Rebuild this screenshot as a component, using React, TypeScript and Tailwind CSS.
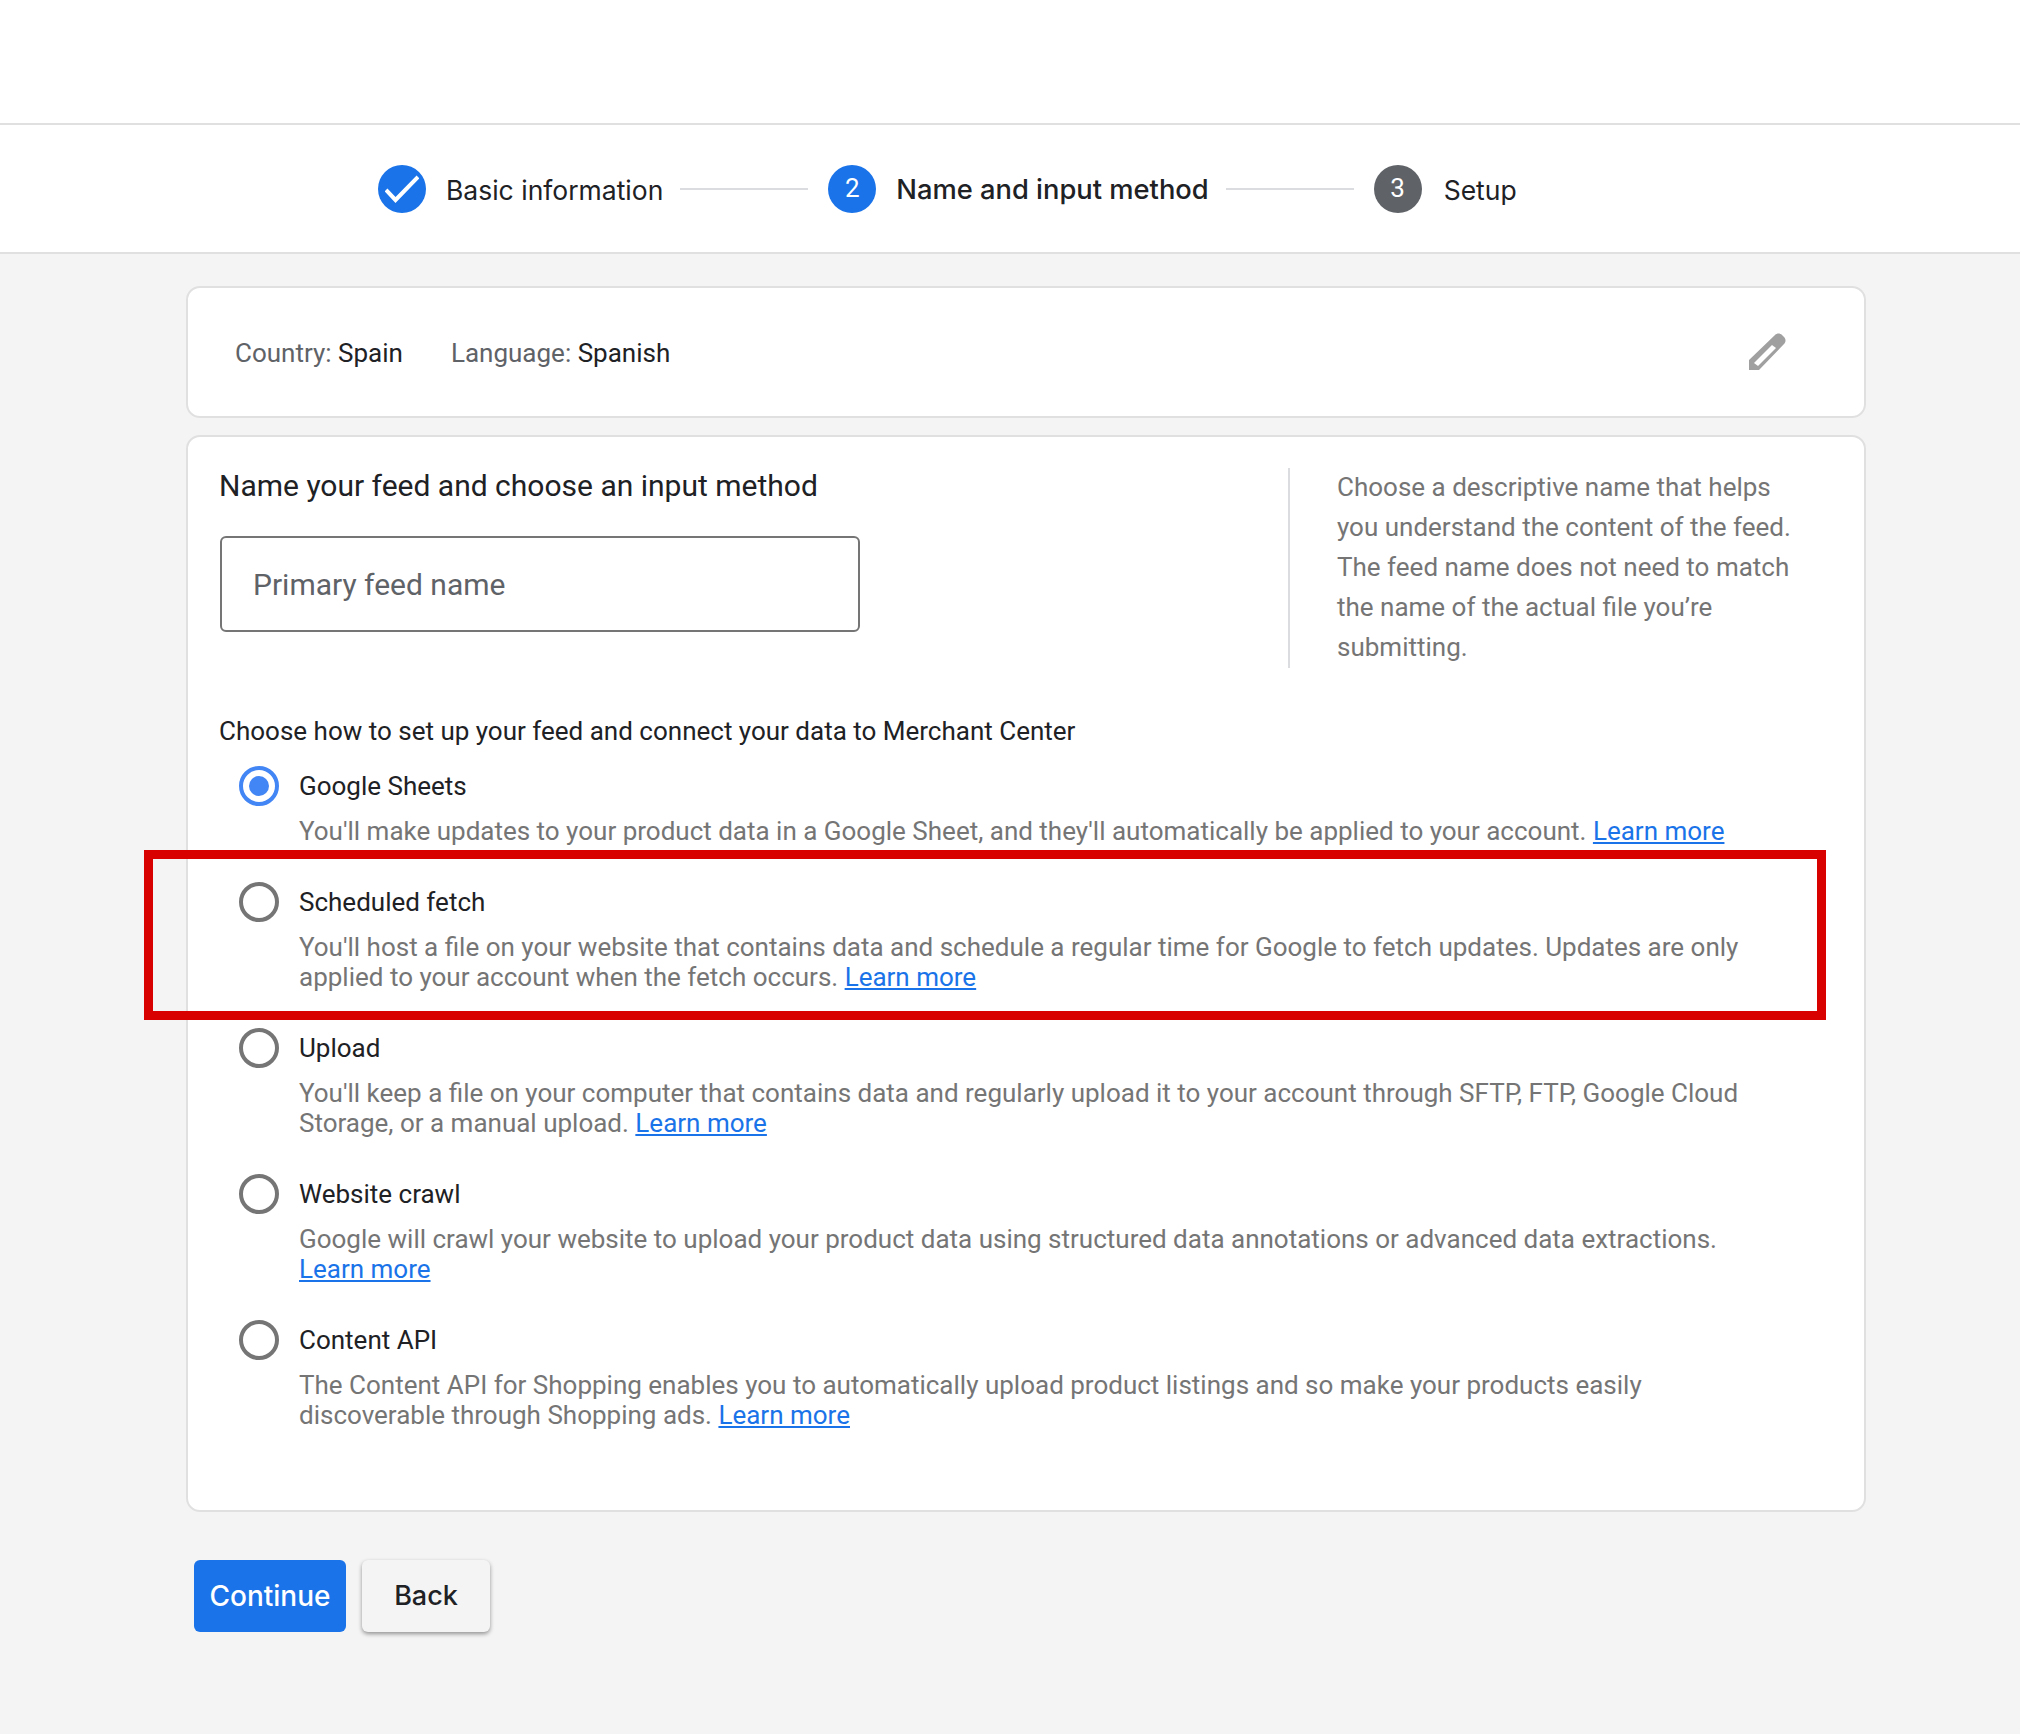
const roboto = "font-['Roboto',sans-serif]";
const sans = "font-['Inter',sans-serif]";

const options = [
  {
    title: "Google Sheets",
    desc: "You'll make updates to your product data in a Google Sheet, and they'll automatically be applied to your account. ",
    selected: true,
  },
  {
    title: "Scheduled fetch",
    desc: "You'll host a file on your website that contains data and schedule a regular time for Google to fetch updates. Updates are only applied to your account when the fetch occurs. ",
  },
  {
    title: "Upload",
    desc: "You'll keep a file on your computer that contains data and regularly upload it to your account through SFTP, FTP, Google Cloud Storage, or a manual upload. ",
  },
  {
    title: "Website crawl",
    desc: "Google will crawl your website to upload your product data using structured data annotations or advanced data extractions. ",
  },
  {
    title: "Content API",
    desc: "The Content API for Shopping enables you to automatically upload product listings and so make your products easily discoverable through Shopping ads. ",
  },
];

function Step({
  badge,
  label,
  dark,
  bold,
}: {
  badge: React.ReactNode;
  label: string;
  dark?: boolean;
  bold?: boolean;
}) {
  return (
    <div className="flex items-center">
      <div
        className={`flex h-[48px] w-[48px] items-center justify-center rounded-full text-[26px] text-white ${
          dark ? "bg-[#5f6368]" : "bg-[#1a73e8]"
        }`}
      >
        {badge}
      </div>
      <span
        className={`pt-[4px] text-[#202124] ${sans} ${dark ? "ml-[22px]" : "ml-[20px]"} ${bold ? "text-[27.3px] font-medium" : "text-[26.5px]"}`}
      >
        {label}
      </span>
    </div>
  );
}

function StepLine() {
  return <div className="ml-[17px] mr-[20px] h-[2px] w-[128px] bg-[#dadce0]" />;
}

function Radio({ selected }: { selected?: boolean }) {
  if (selected) {
    return (
      <div className="flex h-[40px] w-[40px] items-center justify-center rounded-full border-[4px] border-[#4285f4]">
        <div className="h-[20px] w-[20px] rounded-full bg-[#4285f4]" />
      </div>
    );
  }
  return <div className="h-[40px] w-[40px] rounded-full border-[4px] border-[#757575]" />;
}

export default function App() {
  return (
    <div className={`relative min-h-[1734px] bg-[#f4f4f4] ${roboto}`}>
      <div className="h-[125px] border-b-2 border-[#e0e0e0] bg-white" />
      <div className="flex h-[129px] items-center border-b-2 border-[#e0e0e0] bg-white pl-[378px]">
        <Step
          label="Basic information"
          badge={
            <svg width="34" height="30" viewBox="0 0 34 30" fill="none">
              <path d="M1 16L10.5 26L33 3" stroke="white" strokeWidth="4" />
            </svg>
          }
        />
        <StepLine />
        <Step label="Name and input method" badge="2" bold />
        <StepLine />
        <Step label="Setup" badge="3" dark />
      </div>

      <div className="ml-[186px] w-[1680px] pt-[32px]">
        <div className="flex h-[132px] items-center justify-between rounded-[14px] border-2 border-[#e0e0e0] bg-white pl-[47px] pr-[77px] text-[26px]">
          <div className="flex gap-[48px] pt-[2px]">
            <span className="text-[#5f6368]">
              Country: <span className="text-[#202124]">Spain</span>
            </span>
            <span className="text-[#5f6368]">
              Language: <span className="text-[#202124]">Spanish</span>
            </span>
          </div>
          <svg width="38" height="38" viewBox="0 0 38 38" fill="none">
            <path
              d="M0 27L26 2C28 0 31 0 33 2L35 4C37 6 37 9 35 11L10 37H0Z"
              fill="#a0a0a0"
            />
            <path d="M5 30L23 12L27 15L9 33Z" fill="white" />
          </svg>
        </div>

        <div className="mt-[17px] h-[1077px] rounded-[14px] border-2 border-[#e0e0e0] bg-white pl-[31px] pt-[31px]">
          <div className="flex">
            <div className="w-[1069px]">
              <h2 className="-mt-[1px] text-[30px] leading-[38px] text-[#202124]">
                Name your feed and choose an input method
              </h2>
              <div className="ml-[1px] mt-[31px] flex h-[96px] w-[640px] items-center rounded-[6px] border-2 border-[#757575] pl-[31px] text-[30px] text-[#5f6368]">
                Primary feed name
              </div>
            </div>
            <div className="h-[200px] w-[2px] bg-[#dadce0]" />
            <p className="-mt-[1px] ml-[47px] w-[480px] text-[26px] leading-[40px] text-[#757575]">
              Choose a descriptive name that helps you understand the content of the feed. The feed
              name does not need to match the name of the actual file you’re submitting.
            </p>
          </div>

          <p className="mt-[46px] text-[26px] leading-[34px] text-[#202124]">
            Choose how to set up your feed and connect your data to Merchant Center
          </p>

          <div className="mt-[18px] flex flex-col gap-[35px] pl-[20px] pr-[114px]">
            {options.map((o) => (
              <div key={o.title} className="flex gap-[20px]">
                <div className="shrink-0">
                  <Radio selected={o.selected} />
                </div>
                <div className="min-w-0">
                  <div className="text-[26px] leading-[40px] text-[#202124]">{o.title}</div>
                  <p className="mt-[10px] text-[26px] leading-[30.5px] text-[#757575]">
                    {o.desc}
                    <a href="#" className="whitespace-nowrap text-[#1a73e8] underline">
                      Learn more
                    </a>
                  </p>
                </div>
              </div>
            ))}
          </div>
        </div>

        <div className={`mt-[48px] flex gap-[16px] pl-[8px] ${sans}`}>
          <button className="h-[72px] w-[152px] rounded-[6px] bg-[#1a73e8] text-[28px] font-medium text-white">
            Continue
          </button>
          <button className="h-[72px] w-[128px] rounded-[6px] bg-[#f4f4f4] text-[27px] font-medium text-[#202124] shadow-[0_2px_4px_rgba(0,0,0,0.4)]">
            Back
          </button>
        </div>
      </div>

      {/* red highlight drawn over the screenshot */}
      <div className="absolute left-[144px] top-[850px] h-[170px] w-[1682px] border-[9px] border-[#d90000]" />
    </div>
  );
}
